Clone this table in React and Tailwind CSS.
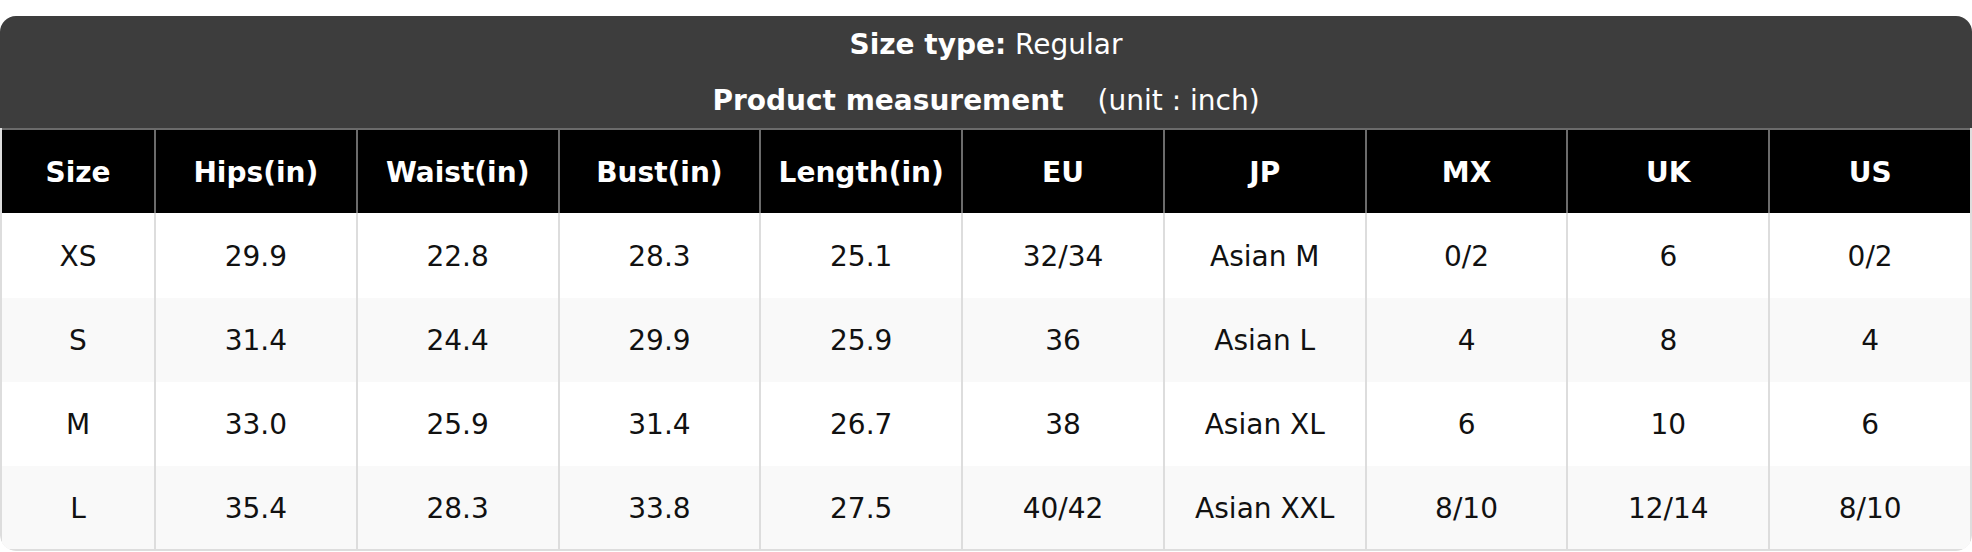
import React from "react";

const columns = ["Size", "Hips(in)", "Waist(in)", "Bust(in)", "Length(in)", "EU", "JP", "MX", "UK", "US"];

const rows = [
  ["XS", "29.9", "22.8", "28.3", "25.1", "32/34", "Asian M", "0/2", "6", "0/2"],
  ["S", "31.4", "24.4", "29.9", "25.9", "36", "Asian L", "4", "8", "4"],
  ["M", "33.0", "25.9", "31.4", "26.7", "38", "Asian XL", "6", "10", "6"],
  ["L", "35.4", "28.3", "33.8", "27.5", "40/42", "Asian XXL", "8/10", "12/14", "8/10"],
];

const grid = "grid grid-cols-[152px_repeat(9,minmax(0,1fr))]";

export default function App() {
  return (
    <div className="min-h-[552px] bg-white pt-[16px] font-['DejaVu_Sans',sans-serif] text-[28px]">
      <div className="overflow-hidden rounded-[16px]">
        {/* size type / measurement title */}
        <div className="flex h-[112px] flex-col items-center bg-[#3d3d3d] pt-[13px] text-white">
          <div className="h-[32px] leading-[32px]">
            <span className="font-bold">Size type:</span> Regular
          </div>
          <div className="mt-[24px] h-[32px] leading-[32px]">
            <span className="font-bold">Product measurement</span>
            <span className="ml-[34px]">(unit : inch)</span>
          </div>
        </div>

        <div className="rounded-b-[16px] border-x-2 border-b-2 border-[#dddddd]">
          {/* column headings */}
          <div className={`${grid} border-t-2 border-[#6b6b6b] bg-black`}>
            {columns.map((col, i) => (
              <div
                key={col}
                className={`flex h-[83px] items-center justify-center pt-[2px] font-bold text-white ${
                  i > 0 ? "border-l-2 border-[#6b6b6b]" : ""
                }`}
              >
                {col}
              </div>
            ))}
          </div>

          {/* size rows */}
          {rows.map((row, r) => (
            <div
              key={row[0]}
              className={`${grid} ${r % 2 === 1 ? "bg-[#f9f9f9]" : "bg-white"} ${
                r === 0 ? "h-[85px]" : r === 3 ? "h-[83px]" : "h-[84px]"
              }`}
            >
              {row.map((cell, i) => (
                <div
                  key={i}
                  className={`flex items-center justify-center pt-[2px] text-[#111111] ${
                    i > 0 ? "border-l-2 border-[#dddddd]" : ""
                  }`}
                >
                  {cell}
                </div>
              ))}
            </div>
          ))}
        </div>
      </div>
    </div>
  );
}
